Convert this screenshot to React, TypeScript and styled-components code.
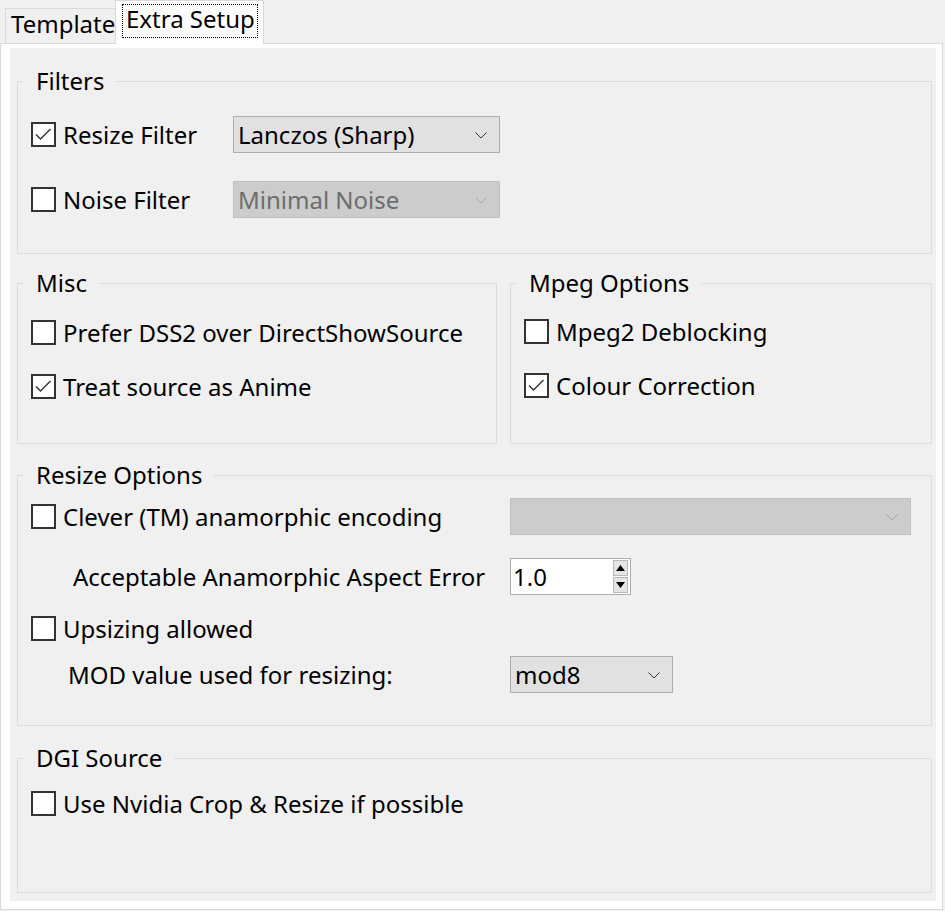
import React from "react";
import styled, { createGlobalStyle } from "styled-components";

const GlobalStyle = createGlobalStyle`
  html, body { margin: 0; padding: 0; background: #f0f0f0; }
  body {
    font-family: "Noto Sans", "Open Sans", sans-serif;
    font-size: 24px;
    color: #000;
  }
  * { box-sizing: border-box; }
`;

const Window = styled.div`
  width: 945px;
  height: 911px;
  overflow: hidden;
  background: #f0f0f0;
`;

const TabStrip = styled.div`
  display: flex;
  align-items: flex-end;
  height: 43px;
  padding-left: 5px;
`;

const Tab = styled.div<{ $selected?: boolean }>`
  display: flex;
  align-items: center;
  border: 1px solid #d9d9d9;
  border-bottom: none;
  line-height: 30px;
  white-space: nowrap;
  ${(p) =>
    p.$selected
      ? `
    position: relative;
    z-index: 1;
    height: 44px;
    width: 149px;
    margin-left: -1px;
    margin-bottom: -1px;
    background: #fff;
    padding: 0 0 4px 6px;
  `
      : `
    height: 35px;
    width: 111px;
    background: #f0f0f0;
    padding: 0 0 4px 5px;
  `}
`;

const FocusRing = styled.span`
  display: inline-flex;
  align-items: center;
  border: 1px dotted #000;
  padding: 0 0 4px 3px;
  width: 136px;
  height: 34px;
  line-height: 30px;
`;

const Panel = styled.div`
  width: 943px;
  height: 867px;
  border: 1px solid #d9d9d9;
  background: #fff;
  padding: 4px 6px 8px 9px;
`;

const Page = styled.div`
  height: 100%;
  background: #f0f0f0;
  padding: 18px 4px 0 7px;
  display: flex;
  flex-direction: column;
`;

const GroupRow = styled.div<{ $mt: number }>`
  display: flex;
  gap: 13px;
  margin-top: ${(p) => p.$mt}px;
`;

const GroupBox = styled.fieldset<{ $h: number; $w?: number; $mt?: number }>`
  margin: ${(p) => p.$mt ?? 0}px 0 0 0;
  padding: 0;
  min-width: 0;
  border: 1px solid #dcdcdc;
  height: ${(p) => p.$h}px;
  width: ${(p) => (p.$w ? `${p.$w}px` : "auto")};
  flex: none;
`;

const Legend = styled.legend`
  margin-left: 5px;
  padding: 0 12px 0 13px;
  line-height: 30px;
  height: 30px;
`;

const GroupBody = styled.div<{ $pt: number }>`
  padding: ${(p) => p.$pt}px 0 0 13px;
  display: flex;
  flex-direction: column;
`;

const Row = styled.div<{ $cols: string; $mt?: number }>`
  display: grid;
  grid-template-columns: ${(p) => p.$cols};
  align-items: center;
  height: 37px;
  margin-top: ${(p) => p.$mt ?? 0}px;
`;

const CheckLabel = styled.label`
  display: flex;
  align-items: center;
  gap: 7px;
  white-space: nowrap;
  line-height: 30px;
`;

const LabelText = styled.span`
  padding-top: 1px;
`;

const BoxFrame = styled.span`
  display: inline-flex;
  flex: none;
  width: 25px;
  height: 25px;
  border: 2px solid #333;
  background: #fff;
`;

const PlainLabel = styled.span<{ $indent: number }>`
  padding-left: ${(p) => p.$indent}px;
  padding-top: 1px;
  white-space: nowrap;
  line-height: 30px;
`;

const Combo = styled.div<{ $w: number; $disabled?: boolean }>`
  width: ${(p) => p.$w}px;
  height: 37px;
  display: flex;
  align-items: center;
  justify-content: space-between;
  padding: 1px 12px 0 4px;
  background: ${(p) => (p.$disabled ? "#cccccc" : "#e1e1e1")};
  border: 1px solid ${(p) => (p.$disabled ? "#bfbfbf" : "#adadad")};
  color: ${(p) => (p.$disabled ? "#6d6d6d" : "#000")};
  line-height: 30px;
  white-space: nowrap;
`;

const Spin = styled.div`
  width: 121px;
  height: 37px;
  display: flex;
  align-items: center;
  justify-content: space-between;
  padding: 0 2px 0 2px;
  background: #fff;
  border: 1px solid #adadad;
  line-height: 30px;
`;

const SpinText = styled.span`
  padding-top: 1px;
`;

const SpinButtons = styled.div`
  display: flex;
  flex-direction: column;
  gap: 1px;
  height: 33px;
`;

const SpinButton = styled.div`
  width: 15px;
  height: 16px;
  display: flex;
  align-items: center;
  justify-content: center;
  background: #e5e5e5;
  border: 1px solid #b8b8b8;
`;

const Chevron: React.FC<{ color: string }> = ({ color }) => (
  <svg width="12" height="7" viewBox="0 0 12 7">
    <polyline points="0.5,0.5 6,6 11.5,0.5" fill="none" stroke={color} strokeWidth="1" />
  </svg>
);

const CheckBox: React.FC<{ checked?: boolean; label: string }> = ({ checked, label }) => (
  <CheckLabel>
    <BoxFrame>
      {checked && (
        <svg width="21" height="21" viewBox="0 0 21 21">
          <polyline points="3,10.5 7.5,15 17.5,5" fill="none" stroke="#333" strokeWidth="1.4" />
        </svg>
      )}
    </BoxFrame>
    <LabelText>{label}</LabelText>
  </CheckLabel>
);

const Triangle: React.FC<{ up?: boolean }> = ({ up }) => (
  <svg width="9" height="6" viewBox="0 0 9 6">
    {up ? <polygon points="0,6 4.5,0 9,6" fill="#000" /> : <polygon points="0,0 4.5,6 9,0" fill="#000" />}
  </svg>
);

export default function App() {
  return (
    <Window>
      <GlobalStyle />
      <TabStrip>
        <Tab>Template</Tab>
        <Tab $selected>
          <FocusRing>Extra Setup</FocusRing>
        </Tab>
      </TabStrip>
      <Panel>
        <Page>
          <GroupBox $h={188}>
            <Legend>Filters</Legend>
            <GroupBody $pt={20}>
              <Row $cols="202px 267px">
                <CheckBox checked label="Resize Filter" />
                <Combo $w={267}>
                  <span>Lanczos (Sharp)</span>
                  <Chevron color="#333" />
                </Combo>
              </Row>
              <Row $cols="202px 267px" $mt={28}>
                <CheckBox label="Noise Filter" />
                <Combo $w={267} $disabled>
                  <span>Minimal Noise</span>
                  <Chevron color="#a6a6a6" />
                </Combo>
              </Row>
            </GroupBody>
          </GroupBox>

          <GroupRow $mt={14}>
            <GroupBox $h={176} $w={480}>
              <Legend>Misc</Legend>
              <GroupBody $pt={16}>
                <Row $cols="1fr">
                  <CheckBox label="Prefer DSS2 over DirectShowSource" />
                </Row>
                <Row $cols="1fr" $mt={17}>
                  <CheckBox checked label="Treat source as Anime" />
                </Row>
              </GroupBody>
            </GroupBox>
            <GroupBox $h={176} $w={422}>
              <Legend>Mpeg Options</Legend>
              <GroupBody $pt={15}>
                <Row $cols="1fr">
                  <CheckBox label="Mpeg2 Deblocking" />
                </Row>
                <Row $cols="1fr" $mt={17}>
                  <CheckBox checked label="Colour Correction" />
                </Row>
              </GroupBody>
            </GroupBox>
          </GroupRow>

          <GroupBox $h={266} $mt={16}>
            <Legend>Resize Options</Legend>
            <GroupBody $pt={8}>
              <Row $cols="479px 401px">
                <CheckBox label="Clever (TM) anamorphic encoding" />
                <Combo $w={401} $disabled>
                  <span />
                  <Chevron color="#a6a6a6" />
                </Combo>
              </Row>
              <Row $cols="479px 121px" $mt={23}>
                <PlainLabel $indent={42}>Acceptable Anamorphic Aspect Error</PlainLabel>
                <Spin>
                  <SpinText>1.0</SpinText>
                  <SpinButtons>
                    <SpinButton>
                      <Triangle up />
                    </SpinButton>
                    <SpinButton>
                      <Triangle />
                    </SpinButton>
                  </SpinButtons>
                </Spin>
              </Row>
              <Row $cols="1fr" $mt={15}>
                <CheckBox label="Upsizing allowed" />
              </Row>
              <Row $cols="479px 163px" $mt={9}>
                <PlainLabel $indent={37}>MOD value used for resizing:</PlainLabel>
                <Combo $w={163}>
                  <span>mod8</span>
                  <Chevron color="#333" />
                </Combo>
              </Row>
            </GroupBody>
          </GroupBox>

          <GroupBox $h={150} $mt={17}>
            <Legend>DGI Source</Legend>
            <GroupBody $pt={12}>
              <Row $cols="1fr">
                <CheckBox label="Use Nvidia Crop & Resize if possible" />
              </Row>
            </GroupBody>
          </GroupBox>
        </Page>
      </Panel>
    </Window>
  );
}
